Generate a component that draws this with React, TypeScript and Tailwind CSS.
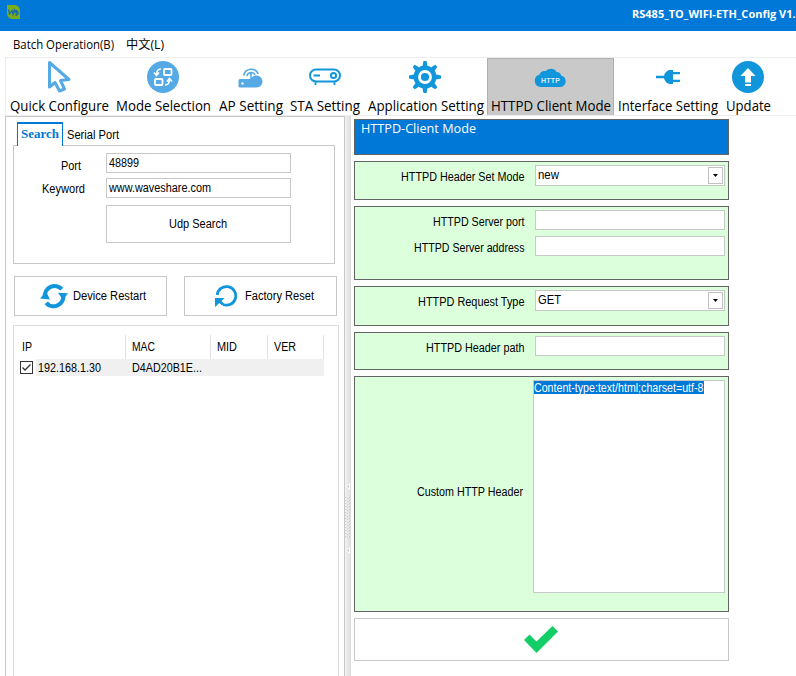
import { useLayoutEffect, useRef, useState, type ReactNode } from 'react';

/** Single line of text, condensed or widened to fill a given advance width. */
function Fit({ w, children, className = '' }: { w: number; children: ReactNode; className?: string }) {
  const ref = useRef<HTMLSpanElement>(null);
  const [scale, setScale] = useState(1);
  useLayoutEffect(() => {
    if (ref.current && ref.current.offsetWidth) {
      const box = ref.current;
      const previous = box.style.transform;
      box.style.transform = 'none';
      setScale(w / box.getBoundingClientRect().width);
      box.style.transform = previous;
    }
  }, [w]);
  return (
    <span className={`flex shrink-0 ${className}`} style={{ width: w }}>
      <span ref={ref} className="inline-block shrink-0 origin-left whitespace-nowrap" style={{ transform: `scaleX(${scale})` }}>
        {children}
      </span>
    </span>
  );
}

const ui = "font-['Open_Sans','Noto_Sans_CJK_SC',sans-serif]";

function CursorIcon() {
  return (
    <svg width="24" height="34" viewBox="0 0 24 34" fill="none" stroke="#55aae5" strokeWidth="3" strokeLinejoin="round">
      <path d="M2.500 2.500V27L8 22.500L12.500 31L17.500 29L13.500 20.500L22 19.500Z" />
    </svg>
  );
}

function ModeIcon() {
  return (
    <svg width="32" height="32" viewBox="0 0 32 32" fill="none" stroke="#fff" strokeWidth="1.8">
      <circle cx="16" cy="16" r="16" fill="#55aae5" stroke="none" />
      <rect x="17" y="8" width="7.500" height="6" rx="1" />
      <rect x="8" y="18" width="7.500" height="6" rx="1" />
      <path d="M14 8C11 8 9.500 10 9.500 14M7 11.500L9.500 14.500L12 11.500M18 24C21 24 22.500 22 22.500 18M20 20.500L22.500 17.500L25 20.500" strokeWidth="1.500" />
    </svg>
  );
}

function RouterIcon() {
  return (
    <svg width="26" height="22" viewBox="0 0 26 22" fill="#55aae5">
      <path d="M2 13H13C14 10.500 16 9.500 18.500 9.500A6 6 0 0 1 18.500 21.500H2Q0.500 21.500 0.500 20V14.500Q0.500 13 2 13Z" />
      <circle cx="4.500" cy="17.500" r="1.200" fill="#fff" />
      <g fill="none" stroke="#55aae5" strokeWidth="1.600">
        <path d="M13 14V7M5.800 9.500A7.500 7.500 0 0 1 20.200 8M9 10A4.200 4.200 0 0 1 17 9" />
      </g>
    </svg>
  );
}

function StaIcon() {
  return (
    <svg width="32" height="18" viewBox="0 0 32 18" fill="none" stroke="#1296db" strokeWidth="2">
      <rect x="1" y="1.500" width="30" height="12" rx="6" />
      <circle cx="24.500" cy="7.500" r="2.600" />
      <path d="M4.500 7.500H11M6.500 14V17M25.500 14V17" strokeWidth="1.800" />
    </svg>
  );
}

function GearIcon() {
  return (
    <svg width="32" height="32" viewBox="0 0 32 32">
      <g fill="#1296db">
        <circle cx="16" cy="16" r="11.500" />
        {[0, 45, 90, 135].map((a) => (
          <path key={a} d="M13.800 3L14.500 0H17.500L18.200 3V29L17.500 32H14.500L13.800 29Z" transform={`rotate(${a} 16 16)`} />
        ))}
      </g>
      <circle cx="16" cy="16" r="5.500" fill="none" stroke="#fff" strokeWidth="2.800" />
      <circle cx="16" cy="16" r="2.800" fill="#1296db" />
    </svg>
  );
}

function HttpIcon() {
  return (
    <svg width="32" height="20" viewBox="0 0 32 20" fill="#1296db">
      <path d="M6.500 19A6.200 6.200 0 0 1 5.500 6.800C6.500 3.500 9 2.500 11.500 3.300C14-.3 21-.2 22.500 4C25 4 27 5.500 27 7.500A5.800 5.800 0 0 1 26 19Z" />
      <text x="16.500" y="14.500" fill="#d4eaf7" fontSize="7" fontWeight="600" textAnchor="middle" textLength="19" className="font-['Liberation_Sans',sans-serif]">
        HTTP
      </text>
    </svg>
  );
}

function PlugIcon() {
  return (
    <svg width="24" height="14" viewBox="0 0 24 14" fill="#1296db">
      <path d="M0 5.800H8C9 2.500 11 0 14.500 0H17V14H14.500C11 14 9 11.500 8 8.200H0ZM17 2H24V4.300H17ZM17 9.700H24V12H17Z" />
    </svg>
  );
}

function UpdateIcon() {
  return (
    <svg width="32" height="32" viewBox="0 0 32 32">
      <circle cx="16" cy="16" r="16" fill="#1296db" />
      <path d="M16 7L23.500 15H19V21.500H13V15H8.500ZM13 23H19V25H13Z" fill="#fff" />
    </svg>
  );
}

function RestartIcon() {
  return (
    <svg width="28" height="26" viewBox="0 0 28 26">
      <g fill="none" stroke="#1296db" strokeWidth="4.200">
        <path d="M5 14A9.700 9.700 0 0 1 21.800 6.200" />
        <path d="M23.200 12A9.700 9.700 0 0 1 6.200 19.800" />
      </g>
      <path d="M0 15.500L6 8.500L10 16.500ZM18 9.800L28 10.300L23 17Z" fill="#1296db" />
    </svg>
  );
}

function ResetIcon() {
  return (
    <svg width="24" height="24" viewBox="0 0 24 24">
      <path d="M3.200 11A9.300 9.300 0 1 1 9 20.500" fill="none" stroke="#1296db" strokeWidth="2.800" />
      <path d="M1 14H10.500L7.500 17L10 19.500L8 21.500L5.500 19L1 23Z" fill="#1296db" />
    </svg>
  );
}

const tools = [
  { text: 'Quick Configure', icon: <CursorIcon />, w: 99, cell: 'w-[106px] pl-1', pad: 'h-[38px] pr-1' },
  { text: 'Mode Selection', icon: <ModeIcon />, w: 95, cell: 'w-[102px] pl-1', pad: 'h-[38px] pr-1' },
  { text: 'AP Setting', icon: <RouterIcon />, w: 64, cell: 'w-[72px] pl-[5px]', pad: 'h-[38px] pr-[3px]' },
  { text: 'STA Setting', icon: <StaIcon />, w: 70, cell: 'w-[77px] pl-1', pad: 'h-[38px] pr-1' },
  { text: 'Application Setting', icon: <GearIcon />, w: 116, cell: 'w-[124px] pl-[5px]', pad: 'h-[38px] pr-[5px]' },
  { text: 'HTTPD Client Mode', icon: <HttpIcon />, w: 120, cell: 'w-[127px] pl-[3px] bg-[#c9c9c9] border border-b-0 border-[#b0b0b0]', pad: 'h-[37px] pr-[5px]' },
  { text: 'Interface Setting', icon: <PlugIcon />, w: 100, cell: 'w-[108px] pl-1', pad: 'h-[38px] pr-1' },
  { text: 'Update', icon: <UpdateIcon />, w: 45, cell: 'w-[54px] pl-1', pad: 'h-[38px] pr-1.5' },
];

function Field({ children, className = '' }: { children?: ReactNode; className?: string }) {
  return <div className={`flex shrink-0 items-center border border-[#c8c8c8] bg-white ${className}`}>{children}</div>;
}

function Select({ value, w }: { value: string; w: number }) {
  return (
    <Field className="h-[21px] w-[190px] justify-between pl-0.5 pr-[1px]">
      <Fit w={w} className="leading-[19px]">{value}</Fit>
      <div className="flex h-[17px] w-[15px] items-center justify-center border border-[#c0c0c0]">
        <svg width="5" height="3" viewBox="0 0 5 3"><path d="M0 0H5L2.500 3Z" /></svg>
      </div>
    </Field>
  );
}

function Row({ label, w, children }: { label: string; w: number; children: ReactNode }) {
  return (
    <div className="flex">
      <div className="flex w-[180px] shrink-0 justify-end pr-[11px] pt-[4px]">
        <Fit w={w}>{label}</Fit>
      </div>
      {children}
    </div>
  );
}

const card = 'shrink-0 border border-[#646464] bg-[#dcffdc] pt-[3px]';

export default function App() {
  return (
    <div className="flex h-[676px] w-[796px] flex-col overflow-hidden bg-white font-['Liberation_Sans',sans-serif] text-[12px] leading-4 text-black">
      <header className="flex h-[31px] shrink-0 items-start justify-between overflow-hidden bg-[#0078d7] pl-1.5 pt-[5px]">
        <svg width="15" height="15" viewBox="0 0 15 15">
          <path d="M1 0H9Q14 1 14 6V14H6Q1 13 1 8Z" fill="#7aae1c" />
          <path d="M2.500 4.500L3.500 9L6 5.500L7 9.500L8.500 4M8.500 8Q10 3.500 10.500 6L10 11M10.500 7Q12.500 5 12 9L10.500 10" fill="none" stroke="#1668a8" strokeWidth="1.200" />
        </svg>
        <div className={`flex w-[164px] pt-px text-[11px] font-bold text-white ${ui}`}>
          <Fit w={170}>RS485_TO_WIFI-ETH_Config V1.0</Fit>
        </div>
      </header>

      <nav className={`flex h-[26px] shrink-0 gap-3 pl-[13px] pt-[6px] text-[12px] ${ui}`}>
        <Fit w={101}>Batch Operation(B)</Fit>
        <Fit w={38}>中文(L)</Fit>
      </nav>

      <div className={`ml-[5px] flex h-[59px] shrink-0 border-b border-l border-t border-[#ededed] text-[14px] ${ui}`}>
        {tools.map((t) => (
          <div key={t.text} className={`flex shrink-0 flex-col ${t.cell}`}>
            <div className={`flex shrink-0 items-center justify-center ${t.pad}`}>{t.icon}</div>
            <Fit w={t.w} className="h-5 leading-5">{t.text}</Fit>
          </div>
        ))}
      </div>

      <div className="flex min-h-0 flex-1 pl-[5px]">
        <aside className="flex w-[340px] shrink-0 flex-col border border-b-0 border-[#c8c8c8] pl-[7px]">
          <div className="mt-[5px] flex h-[23px] shrink-0 pl-1">
            <div className="z-10 -mb-px flex h-[24px] w-[46px] justify-center border border-b-0 border-t-2 border-[#0078d7] bg-white pt-0.5 font-['Liberation_Serif',serif] text-[12px] font-bold text-[#0078d7]">
              <Fit w={38}>Search</Fit>
            </div>
            <Fit w={52} className="ml-1 pt-[5px]">Serial Port</Fit>
          </div>
          <section className="flex h-[119px] w-[322px] shrink-0 flex-col border border-[#c8c8c8] pt-[7px]">
            <div className="flex h-[25px] shrink-0">
              <div className="w-[92px] shrink-0 pl-[47px] pt-[5px]"><Fit w={20}>Port</Fit></div>
              <Field className="h-5 w-[185px] pl-0.5"><Fit w={30}>48899</Fit></Field>
            </div>
            <div className="flex h-[27px] shrink-0">
              <div className="w-[92px] shrink-0 pl-7 pt-[3px]"><Fit w={43}>Keyword</Fit></div>
              <Field className="h-5 w-[185px] pl-0.5"><Fit w={102}>www.waveshare.com</Fit></Field>
            </div>
            <div className="ml-[92px] flex h-[38px] w-[185px] shrink-0 items-center justify-center border border-[#c8c8c8] pr-0.5">
              <Fit w={58}>Udp Search</Fit>
            </div>
          </section>
          <div className="mt-3 flex shrink-0 gap-[17px] pl-px">
            <button className="flex h-10 w-[153px] items-center gap-[5px] border border-[#c8c8c8] pl-[25px]">
              <RestartIcon /><Fit w={73}>Device Restart</Fit>
            </button>
            <button className="flex h-10 w-[153px] items-center gap-[7px] border border-[#c8c8c8] pl-[29px]">
              <ResetIcon /><Fit w={69}>Factory Reset</Fit>
            </button>
          </div>
          <section className="mt-[9px] flex w-[326px] flex-1 flex-col border border-b-0 border-[#dcdcdc] pt-[9px]">
            <div className="flex h-6 shrink-0 pt-[4px]">
              <div className="-mt-1 flex w-[112px] border-r border-[#e2e2e2] pl-2 pt-1"><Fit w={10}>IP</Fit></div>
              <div className="-mt-1 flex w-[85px] border-r border-[#e2e2e2] pl-1.5 pt-1"><Fit w={23}>MAC</Fit></div>
              <div className="-mt-1 flex w-[57px] border-r border-[#e2e2e2] pl-1.5 pt-1"><Fit w={20}>MID</Fit></div>
              <div className="-mt-1 flex w-[56px] border-r border-[#e2e2e2] pl-1.5 pt-1"><Fit w={22}>VER</Fit></div>
            </div>
            <div className="flex h-[17px] shrink-0">
              <div className="flex w-[22px] items-center pl-1.5">
                <svg width="13" height="13" viewBox="0 0 13 13" fill="none" stroke="#333">
                  <rect x=".5" y=".5" width="12" height="12" />
                  <path d="M2.500 6.500L5 9L10.500 3.500" strokeWidth="1.300" />
                </svg>
              </div>
              <div className="flex w-[288px] bg-[#f0f0f0] pl-[2px] pt-px">
                <Fit w={63}>192.168.1.30</Fit>
                <Fit w={70} className="ml-[31px]">D4AD20B1E...</Fit>
              </div>
            </div>
          </section>
        </aside>

        <div className="flex w-[6px] shrink-0 flex-col items-center bg-linear-to-r from-[#f2f2f2] to-[#dcdcdc] pt-[367px]">
          <svg width="6" height="72" viewBox="0 0 6 72">
            <path d="M5 0V7L1 3.500ZM5 64V71L1 67.500Z" fill="#fff" />
            <path d="M4 2V5L2 3.500ZM4 66V69L2 67.500Z" fill="#c0c0c0" />
            <g fill="#c8c8c8">
              {Array.from({ length: 14 }, (_, i) => (
                <path key={i} d={`M0 ${14 + i * 3}h1v1h-1zM2 ${15 + i * 3}h1v1h-1zM4 ${14 + i * 3}h1v1h-1z`} />
              ))}
            </g>
          </svg>
        </div>

        <main className="flex flex-col pl-[3px] pt-[3px]">
          <div className={`flex h-9 w-[375px] shrink-0 border border-[#646464] bg-[#0078d7] pl-1.5 text-[12.500px] text-white ${ui}`}>
            <Fit w={115} className="pt-px">HTTPD-Client Mode</Fit>
          </div>
          <div className={`mt-1.5 h-[39px] ${card}`}>
            <Row label="HTTPD Header Set Mode" w={123.5}><Select value="new" w={21} /></Row>
          </div>
          <div className={`mt-1.5 flex h-[74px] flex-col gap-1.5 ${card}`}>
            <Row label="HTTPD Server port" w={91.5}><Field className="h-5 w-[190px]" /></Row>
            <Row label="HTTPD Server address" w={110.5}><Field className="h-5 w-[190px]" /></Row>
          </div>
          <div className={`mt-1.5 h-10 ${card}`}>
            <Row label="HTTPD Request Type" w={106.5}><Select value="GET" w={23} /></Row>
          </div>
          <div className={`mt-1.5 h-[38px] ${card}`}>
            <Row label="HTTPD Header path" w={98.5}><Field className="h-5 w-[190px]" /></Row>
          </div>
          <div className={`mt-1.5 flex h-[236px] ${card}`}>
            <div className="flex w-[178px] justify-end pr-[10px] pt-[104px]"><Fit w={106}>Custom HTTP Header</Fit></div>
            <div className="h-[213px] w-[192px] border border-[#c8c8c8] bg-white">
              <div className="h-[13px] w-[170px] bg-[#0078d7] leading-[14px] text-white"><Fit w={169.5}>Content-type:text/html;charset=utf-8</Fit></div>
            </div>
          </div>
          <button className="mt-1.5 flex h-[43px] w-[375px] shrink-0 items-center justify-center border border-[#c8c8c8] pr-0.5">
            <svg width="34" height="27" viewBox="0 0 34 27" fill="#13ce66">
              <path d="M0 14L5.500 8.500L12.500 15.500L28.500 0L34 5.500L12.500 27Z" />
            </svg>
          </button>
        </main>
      </div>
    </div>
  );
}
